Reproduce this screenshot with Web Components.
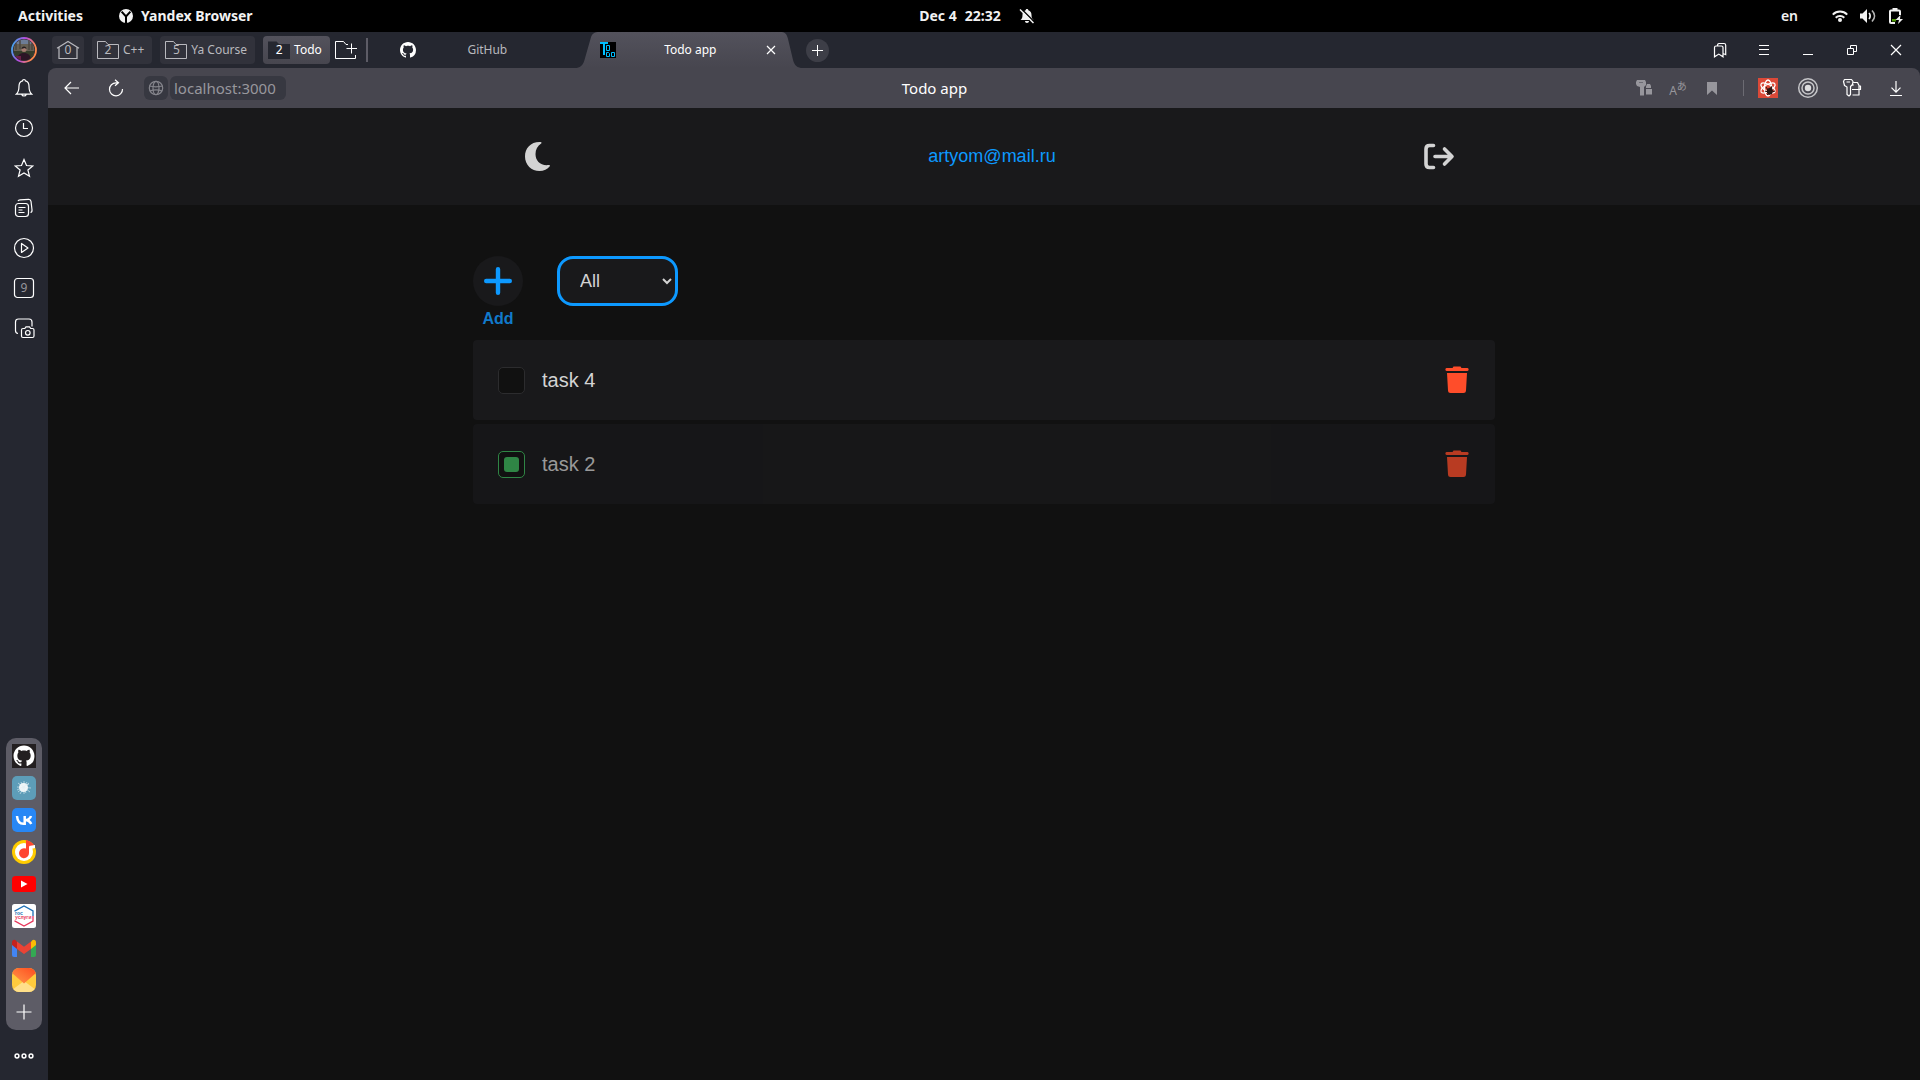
<!DOCTYPE html>
<html lang="en">
<head>
<meta charset="utf-8">
<title>Todo app</title>
<style>
  html, body { margin: 0; height: 100%; background: #111; }
  body { font-family: "Noto Sans", sans-serif; }
</style>
</head>
<body>
<desktop-shell>
  <system-bar slot="system"></system-bar>
  <side-rail slot="rail"></side-rail>
  <tab-strip slot="tabs"></tab-strip>
  <address-bar slot="address"></address-bar>
  <todo-app>
    <todo-item>task 4</todo-item>
    <todo-item done>task 2</todo-item>
  </todo-app>
</desktop-shell>

<script>
const define = (name, html, setup) => {
  const tpl = document.createElement('template');
  tpl.innerHTML = '<style>*{box-sizing:border-box}button{font:inherit;color:inherit;background:none;border:0;padding:0;margin:0;cursor:pointer}</style>' + html;
  customElements.define(name, class extends HTMLElement {
    constructor() {
      super();
      this.attachShadow({ mode: 'open' }).append(tpl.content.cloneNode(true));
    }
    connectedCallback() { if (setup) setup(this, this.shadowRoot); }
  });
};

const line = 'fill="none" stroke="currentColor" stroke-width="1.2"';
const thin = 'fill="none" stroke="currentColor" stroke-width="1"';
const cat = 'M8 0C3.58 0 0 3.58 0 8c0 3.54 2.29 6.53 5.47 7.59.4.07.55-.17.55-.38 0-.19-.01-.82-.01-1.49-2.01.37-2.53-.49-2.69-.94-.09-.23-.48-.94-.82-1.13-.28-.15-.68-.52-.01-.53.63-.01 1.08.58 1.23.82.72 1.21 1.87.87 2.33.66.07-.52.28-.87.51-1.07-1.78-.2-3.64-.89-3.64-3.95 0-.87.31-1.59.82-2.15-.08-.2-.36-1.02.08-2.12 0 0 .67-.21 2.2.82.64-.18 1.32-.27 2-.27s1.36.09 2 .27c1.53-1.04 2.2-.82 2.2-.82.44 1.1.16 1.92.08 2.12.51.56.82 1.27.82 2.15 0 3.07-1.87 3.75-3.65 3.95.29.25.54.73.54 1.48 0 1.07-.01 1.93-.01 2.2 0 .21.15.46.55.38A8.01 8.01 0 0 0 16 8c0-4.42-3.58-8-8-8z';

/* name: [width, height, markup] */
const ICONS = {
  yandex: [14, 14, '<circle cx="7" cy="7" r="7" fill="#f2f2f2"/><path d="M2.6 2.6 7 7.4l4.4-4.8M7 7v7" fill="none" stroke="#000" stroke-width="2"/>'],
  mute: [16, 16, '<path d="M8 1c.8 0 1.3.5 1.3 1.2C11.5 2.8 12.5 4.600 12.5 7c0 3 .8 4 2 5H1.5c1.2-1 2-2 2-5 0-2.400 1-4.200 3.200-4.800C6.700 1.5 7.200 1 8 1zM6 13h4c0 1.3-.8 2-2 2s-2-.7-2-2z" fill="#f2f2f2"/><path d="M2.5 1 16 14.5" stroke="#000" stroke-width="1.5"/><path d="M1 1.5 14.5 15" stroke="#f2f2f2" stroke-width="1.5"/>'],
  wifi: [16, 16, '<g fill="none" stroke="#f2f2f2" stroke-width="2"><path d="M.8 6.600C4.800 2.600 11.2 2.600 15.2 6.600"/><path d="M3.7 9.700c2.400-2.3 6.200-2.3 8.600 0"/></g><circle cx="8" cy="12" r="2" fill="#f2f2f2"/>'],
  volume: [16, 16, '<path d="M0 5.5h2.5L7 1v14L2.5 10.5H0z" fill="#f2f2f2"/><path d="M9 5c1.5 1.5 1.5 4.5 0 6" fill="none" stroke="#f2f2f2" stroke-width="1.7"/><path d="M12 2.5c3.3 3.3 3.3 7.7 0 11" fill="none" stroke="#b5b5b5" stroke-width="1.7"/>'],
  battery: [16, 16, '<path d="M4.5 0h5v2h-5z" fill="#f2f2f2"/><path d="M7 15H3a1 1 0 0 1-1-1V3.5a1 1 0 0 1 1-1h8a1 1 0 0 1 1 1V7" fill="none" stroke="#f2f2f2" stroke-width="2"/><path d="M4 11h4v2.5H4z" fill="#4e9a06"/><path d="M12.5 7 7.5 12h3.5l-1 4 5-5h-3z" fill="#f2f2f2"/>'],
  avatar: [26, 26, '<defs><linearGradient id="r" x2="1" y2=".3"><stop offset="0" stop-color="#2cb8ee"/><stop offset=".5" stop-color="#b34be0"/><stop offset="1" stop-color="#ff8a4a"/></linearGradient><clipPath id="c"><circle cx="13" cy="13" r="10.5"/></clipPath></defs><circle cx="13" cy="13" r="12" fill="none" stroke="url(#r)" stroke-width="1.8"/><g clip-path="url(#c)"><path fill="#655f54" d="M0 0h26v26H0z"/><path fill="#6d7c96" d="M2 2h22v5H2z"/><path fill="#353d2b" d="M2 14h22v10H2z"/><path d="M5 4v9M9 3v9M18 3v10M21 5v8" stroke="#4b463f" stroke-width="1.5"/><path fill="#2c1526" d="M6 24c0-6 3-8 7-8s7 2 7 8z"/><path fill="#6d1f4a" d="M5 19h5v5H5z"/><circle cx="13" cy="12.5" r="2.5" fill="#a67c71"/><path fill="#251f22" d="M10.5 12a2.5 2.5 0 0 1 5 0l-2-1z"/></g>'],
  bell: [18, 20, `<path ${line} d="M9 1.5c1 0 1.4.6 1.4 1.3C13 3.5 14 5.5 14 8c0 5 .7 6.5 2.8 8.2H1.2C3.3 14.5 4 13 4 8c0-2.5 1-4.5 3.6-5.2C7.6 2.1 8 1.5 9 1.5zM6.800 16.5c.5 2 3.9 2 4.4 0"/>`],
  clock: [20, 20, `<circle cx="10" cy="10" r="8.5" ${line}/><path ${line} d="M9.500 5v5.5H14"/>`],
  star: [20, 20, `<path ${line} d="m10 1.5 2.5 6 6.2.5-4.8 4 1.6 6.3L10 14.9l-5.5 3.4L6.100 12 1.3 8l6.200-.5z"/>`],
  pages: [20, 20, `<rect x="1.500" y="5.500" width="13" height="13" rx="3" ${line}/><path ${line} d="M4 3c.4-.8 1-1 2-1.100l8.5-.6c1.5-.1 2.3.6 2.5 2l1 8.5c.2 1.5-.5 2.5-1.5 2.700M4.5 9.500h7M4.5 12h4M4.5 14.5h6"/>`],
  play: [22, 22, `<circle cx="11" cy="11" r="9.5" ${line}/><path ${line} stroke-linejoin="round" d="M8.500 6.500v9l6.500-4.500z"/>`],
  square: [22, 22, `<rect x="1.500" y="1.500" width="19" height="19" rx="3" ${line}/>`],
  camera: [22, 22, `<path ${line} d="M5 16.5c-1.8-.2-2.5-1.2-2.5-3V5c0-2 1-3 3-3h10.5c2 0 3 1 3 3v4.5M8.500 13c0-1 .5-1.500 1.500-1.500h1.800L13 9.800h3.500l1.200 1.700h1.800c1 0 1.500.5 1.500 1.500v6c0 1-.5 1.500-1.500 1.500H10c-1 0-1.500-.5-1.500-1.500z"/><circle cx="14.800" cy="15.800" r="2.300" ${line}/>`],
  dots: [20, 8, '<g fill="none" stroke="#fff" stroke-width="1.500"><circle cx="3" cy="4" r="1.900"/><circle cx="10" cy="4" r="1.900"/><circle cx="17" cy="4" r="1.900"/></g>'],
  githubTile: [24, 24, `<path fill="#231f20" d="M0 0h24v24H0z"/><path fill="#fff" transform="translate(1.5 1.5) scale(1.31)" d="${cat}"/>`],
  splash: [24, 24, '<rect width="24" height="24" rx="5" fill="#5d9db8"/><circle cx="11.5" cy="11.500" r="4.500" fill="#f2f8fa"/><path d="m6 7 12 9M17 7 6 16M12 5v13M5 11l14 1M9 6l5 11M15 6l-7 12M5 14l12-6" stroke="#e4f0f4" stroke-width=".6"/>'],
  vk: [24, 24, '<rect width="24" height="24" rx="5" fill="#2787f5"/><path d="M5 8c.4 4.800 2.600 7.800 6.500 7.800h1.200V8M19 8c-.7 2.300-2.800 3.900-5.800 4 3.200.2 4.900 1.400 6 4" fill="none" stroke="#fff" stroke-width="2.500"/>'],
  music: [24, 24, '<circle cx="12" cy="12" r="12" fill="#fc0"/><circle cx="12" cy="12" r="9" fill="#fff"/><path d="M14 0c3.200.7 6 2.400 8 5l-2 3-3-1.800V13a5 5 0 1 1-3-4.400z" fill="#ff4530"/><path d="M23 5v3l-4 1-2-3z" fill="#fff"/>'],
  youtube: [24, 24, '<rect y="4" width="24" height="16" rx="3.500" fill="#f00"/><path d="m9 8.500 6.500 3.500L9 15.500z" fill="#fff"/>'],
  gos: [24, 24, '<rect width="24" height="24" rx="2.500" fill="#fff"/><path d="M3 7.500V7l9-5 9 5v5" fill="none" stroke="#1d6fb5" stroke-width="1.300"/><path d="M21 12v5l-9 5-9-5v-.5" fill="none" stroke="#e8375c" stroke-width="1.300"/><g font-family="Liberation Sans" font-weight="700"><text x="3" y="11" font-size="5" fill="#1d6fb5">гос</text><text x="3" y="15" font-size="5" fill="#e8375c">услуги</text></g>'],
  gmail: [24, 24, '<path fill="#4285f4" d="M0 7h5v14H2a2 2 0 0 1-2-2z"/><path fill="#34a853" d="M19 7h5v12a2 2 0 0 1-2 2h-3z"/><path fill="#fbbc04" d="m19 6 1-1.500c2-1.500 4-.2 4 2V9l-5 4z"/><path fill="#c5221f" d="M5 6 4 4.500C2 3 0 4.300 0 6.500V9l5 4z"/><path fill="#ea4335" d="m5 5.500 7 5.300 7-5.300V13l-7 5-7-5z"/>'],
  mail: [24, 24, '<defs><clipPath id="m"><rect width="24" height="24" rx="7"/></clipPath><linearGradient id="g" x1="1" x2="0" y2="1"><stop stop-color="#ff4b1f"/><stop offset="1" stop-color="#ff9b4a"/></linearGradient></defs><g clip-path="url(#m)"><path fill="#ffcb3d" d="M0 0h24v24H0z"/><path fill="#ffe08a" d="m0 22 12-9 12 9v2H0z"/><path fill="url(#g)" d="M0 0h24v5L12 15.500 0 5z"/></g>'],
  plus: [16, 16, `<path ${line} d="M8 .5v15M.5 8h15"/>`],
  home: [24, 20, `<path ${line} d="M1 8.200 12 1.500l11 6.700M3 7.500v11h18v-11"/>`],
  folder: [24, 20, `<path ${thin} d="M1.500 1.500h8l2.500 3h10.500v14h-21z"/>`],
  folderFull: [24, 20, '<path fill="#252730" d="M1 1.500h8.500L12 4h11v15H1z"/>'],
  folderPlus: [24, 20, `<path ${thin} d="M14 4.500h-2l-2.500-3h-8v17h20V15M17.500 3.500v10M12.500 8.500h10.500"/>`],
  github: [16, 16, `<path fill="#fff" d="${cat}"/>`],
  todo: [16, 16, '<path d="M0 0h16v16H0z"/><path fill="#00bfff" d="M0 0h8v2H5v11H3V2H0z"/><path d="M6.500 3.500h3v5h-3zM6.500 10.500h2l1 1v3h-3zM11.500 10.500h3v4h-3z" fill="none" stroke="#00bfff"/>'],
  close: [12, 12, `<path ${line} d="m2 2 8 8M10 2l-8 8"/>`],
  closeBig: [14, 14, `<path ${line} d="m2 2 10 10M12 2 2 12"/>`],
  smallPlus: [13, 13, '<path stroke="#fff" d="M6.500 1v11M1 6.500h11"/>'],
  bookmarks: [16, 16, `<path ${line} d="M2.500 5.500c0-1 .5-1.500 1.500-1.500h5.500c1 0 1.500.5 1.500 1.500v9.300l-4.200-2.700-4.300 2.700zM5.500 3.800C5.500 2 6 1.500 7 1.500h5c1.200 0 1.700.5 1.700 1.700v9.500L11 11.500"/>`],
  menu: [12, 12, '<path stroke="#fff" d="M1 1.500h10M1 5.500h10M1 10.500h10"/>'],
  min: [12, 12, '<path stroke="#fff" d="M1 10.500h10"/>'],
  restore: [12, 12, '<path fill="none" stroke="#fff" d="M1.500 4.500h6v6h-6zM4.500 4V1.500h6v6H8"/>'],
  back: [18, 16, `<path ${line} d="M16 8H2M8 2 2 8l6 6"/>`],
  reload: [18, 18, `<path ${line} d="M11 3.800H9A6.500 6.500 0 1 0 15.500 10M8 .8l3.500 3-3.500 3"/>`],
  globe: [16, 16, `<g ${line}><circle cx="8" cy="8" r="6.700"/><ellipse cx="8" cy="8" rx="3" ry="6.700"/><path d="M1.300 6c4 1 9 1 13.400 0M1.800 11c4-1.500 8.500-1.500 12.400 0"/></g>`],
  keyFull: [18, 18, '<path fill="#97969c" d="M1 3l1-2h8l1 2v3L9 8v8.500H5V8L2 7 1 5z"/><path d="M4 3.500h4" stroke="#6c6b73"/><path fill="#97969c" d="M12 5h3l1 2v2h-5V7.500zM11 10h6v5.500h-6z"/>'],
  bookmark: [12, 16, '<path fill="#97969c" d="M1 2h10v13l-5-4.500L1 15z"/>'],
  react: [20, 20, '<path fill="#db4938" d="M0 0h20v20H0z"/><g fill="none" stroke="#fff" stroke-width="1.300"><ellipse cx="10" cy="10" rx="3.500" ry="8"/><ellipse cx="10" cy="10" rx="3.500" ry="8" transform="rotate(60 10 10)"/><ellipse cx="10" cy="10" rx="3.500" ry="8" transform="rotate(120 10 10)"/></g><path d="m9 11 4-2 2 3-1 4-3 1-2-2z" fill="#2a1614"/><path d="M8 9l2 3M14 8l-1 3M7 13l3 1M17 13l-3 1M9 17l2-2" stroke="#2a1614"/>'],
  target: [22, 22, '<g fill="none" stroke="#c5c5c8" stroke-width="1.500"><circle cx="11" cy="11" r="9.300"/><circle cx="11" cy="11" r="6"/></g><circle cx="11" cy="11" r="3.200" fill="#dcdcde"/>'],
  key: [20, 20, `<path ${line} stroke-linejoin="round" d="M2.500 1.500h7l1.500 2-.5 3-2 2v8l-1.500 1.500L5 16.500V9L2.500 7.500l-1-4zM4.500 4h3.500M11.500 4.500h4l1.500 3v9.500h-6.500M10.500 7.500l1-1M10 11.500h8.500v-3.500h-1.500"/>`],
  download: [14, 18, `<path ${line} d="M7 2v11M2.500 8.700 7 13.200l4.500-4.500M1 16.500h12"/>`],
  moon: [27, 31, '<path fill="#d3d3d3" d="M16.600 1C7 .5 1 7 1 15.500 1 24 7.500 30 15.500 30c4.300 0 8-1.800 10.300-4.800.4-.8-.2-1.500-1-1.200C16.500 25 11.500 20 11.500 13c0-4.500 2-8.200 5.700-10.500.7-.6.300-1.500-.6-1.500z"/>'],
  logout: [32, 28, '<g fill="none" stroke="#d3d3d3" stroke-width="3.600" stroke-linecap="round" stroke-linejoin="round"><path d="M10.500 2.500H6.500C4 2.500 3 3.500 3 6v15c0 2.500 1 3.500 3.500 3.500h4"/><path d="M12 13.500h16M21.500 6l7.500 7.500-7.500 7.500"/></g>'],
  add: [28, 28, '<path d="M14 2.200v23.600M2.200 14h23.600" fill="none" stroke="#0d99ff" stroke-width="4.400" stroke-linecap="round"/>'],
  trash: [24, 28, '<path fill="#ff4d2a" d="M1.500 2h6l1-1.500h7l1 1.500h6c1.500.3 1.500 2.700 0 3h-21C0 4.700 0 2.300 1.500 2zM2 7h20l-1 17.500c-.1 1.700-1 2.500-2.500 2.500h-13C4 27 3.100 26.200 3 24.500z"/>']
};

define('ui-icon', `<style>:host{display:block;flex:none;line-height:0}svg{display:block;margin:auto}</style><span></span>`, (el, root) => {
  const [w, h, body] = ICONS[el.getAttribute('name')];
  root.querySelector('span').innerHTML = `<svg width="${w}" height="${h}" viewBox="0 0 ${w} ${h}" aria-hidden="true">${body}</svg>`;
});

define('desktop-shell', `
<style>
  :host { display: flex; flex-direction: column; min-height: 100vh; background: #252730; }
  .window { flex: 1; display: grid; grid-template-columns: 48px minmax(0, 1fr); }
  .main { display: flex; flex-direction: column; }
</style>
<slot name="system"></slot>
<div class="window">
  <slot name="rail"></slot>
  <div class="main"><slot name="tabs"></slot><slot name="address"></slot><slot></slot></div>
</div>`);

define('system-bar', `
<style>
  :host { display: grid; grid-template-columns: 1fr auto 1fr; align-items: center; height: 32px; padding: 0 16px; background: #000; color: #f2f2f2; font: 700 14px/32px "Noto Sans", sans-serif; }
  div, .app { display: flex; align-items: center; }
  .start { gap: 36px; padding-left: 2px; } .app { gap: 8px; }
  .time { display: flex; gap: 8px; }
  .end { justify-content: space-between; padding-left: 18px; }
  .tray { gap: 12px; font-weight: 600; } .tray span { margin-right: 22px; }
</style>
<div class="start"><button>Activities</button><button class="app"><ui-icon name="yandex"></ui-icon>Yandex Browser</button></div>
<div class="time"><span>Dec 4</span><span>22:32</span></div>
<div class="end"><ui-icon name="mute"></ui-icon>
  <div class="tray"><span>en</span><ui-icon name="wifi"></ui-icon><ui-icon name="volume"></ui-icon><ui-icon name="battery"></ui-icon></div></div>`);

define('side-rail', `
<style>
  :host { display: flex; flex-direction: column; align-items: center; color: #fff; padding-bottom: 4px; }
  button { display: grid; place-items: center; width: 48px; height: 40px; }
  button > * { grid-area: 1 / 1; }
  .profile { height: 36px; }
  .count { color: #97969c; font-size: 12px; line-height: 20px; }
  .dock { display: flex; flex-direction: column; gap: 8px; margin: auto 0 6px; padding: 6px; border-radius: 10px; background: #5d5c66; }
  .dock button { width: 24px; height: 24px; }
</style>
<button class="profile" aria-label="Profile"><ui-icon name="avatar"></ui-icon></button>
<button aria-label="Notifications"><ui-icon name="bell"></ui-icon></button>
<button aria-label="History"><ui-icon name="clock"></ui-icon></button>
<button aria-label="Favourites"><ui-icon name="star"></ui-icon></button>
<button aria-label="Collections"><ui-icon name="pages"></ui-icon></button>
<button aria-label="Video"><ui-icon name="play"></ui-icon></button>
<button aria-label="Open tabs"><ui-icon name="square"></ui-icon><span class="count">9</span></button>
<button aria-label="Screenshot"><ui-icon name="camera"></ui-icon></button>
<nav class="dock">
  <button aria-label="GitHub"><ui-icon name="githubTile"></ui-icon></button>
  <button aria-label="Chat"><ui-icon name="splash"></ui-icon></button>
  <button aria-label="VK"><ui-icon name="vk"></ui-icon></button>
  <button aria-label="Music"><ui-icon name="music"></ui-icon></button>
  <button aria-label="YouTube"><ui-icon name="youtube"></ui-icon></button>
  <button aria-label="Gosuslugi"><ui-icon name="gos"></ui-icon></button>
  <button aria-label="Gmail"><ui-icon name="gmail"></ui-icon></button>
  <button aria-label="Mail"><ui-icon name="mail"></ui-icon></button>
  <button aria-label="Add"><ui-icon name="plus"></ui-icon></button>
</nav>
<button aria-label="More"><ui-icon name="dots"></ui-icon></button>`);

define('tab-group', `
<style>
  :host { display: block; color: #b9b9be; }
  button { display: flex; align-items: center; gap: 3px; height: 28px; padding: 0 8px 0 4px; border-radius: 4px; background: #31323b; font-size: 12px; line-height: 28px; white-space: nowrap; }
  :host([compact]) button { gap: 0; padding: 0 4px; }
  :host([active]) button { background: linear-gradient(#53525c, #47464f); color: #fff; }
  .mark { display: grid; place-items: center; }
  .mark > * { grid-area: 1 / 1; }
  .mark span { line-height: 20px; }
</style>
<button><span class="mark"></span><slot></slot></button>`, (el, root) => {
  root.querySelector('.mark').innerHTML =
    `<ui-icon name="${el.getAttribute('icon')}"></ui-icon><span>${el.getAttribute('count')}</span>`;
});

define('tab-strip', `
<style>
  :host { display: flex; align-items: center; height: 36px; color: #fff; font-size: 13px; }
  .groups { display: flex; align-items: center; gap: 8px; padding-left: 4px; }
  .new-group { margin-left: -4px; }
  .divider { width: 2px; height: 24px; background: #5d5c66; }
  .tab { display: flex; align-items: center; }
  .tab span { flex: 1; text-align: center; font-size: 12px; line-height: 36px; }
  .idle { width: 175px; padding-right: 16px; margin-left: 32px; color: #b9b9be; }
  .edge { display: block; flex: none; }
  .body { align-self: stretch; width: 180px; padding-right: 3px; background: linear-gradient(#53525c, #47464f); }
  .round { display: grid; place-items: center; width: 23px; height: 23px; border-radius: 12px; background: #3d3e47; margin-left: 3px; }
  .controls { display: flex; margin-left: auto; padding-right: 2px; }
  .controls button { display: grid; place-items: center; width: 44px; height: 36px; }
</style>
<div class="groups">
  <tab-group compact icon="home" count="0"></tab-group>
  <tab-group icon="folder" count="2">C++</tab-group>
  <tab-group icon="folder" count="5">Ya Course</tab-group>
  <tab-group active icon="folderFull" count="2">Todo</tab-group>
  <button class="new-group" aria-label="New group"><ui-icon name="folderPlus"></ui-icon></button>
  <div class="divider"></div>
</div>
<div class="tab idle"><ui-icon name="github"></ui-icon><span>GitHub</span></div>
<svg class="edge" width="25" height="36" viewBox="0 0 25 36"><defs><linearGradient id="a" x2="0" y2="1"><stop stop-color="#53525c"/><stop offset="1" stop-color="#47464f"/></linearGradient></defs><path fill="url(#a)" d="M25 0C19 0 17 1.500 15.500 7L9.500 28C8 33.500 5 36 0 36h25z"/></svg>
<div class="tab body"><ui-icon name="todo"></ui-icon><span>Todo app</span><button aria-label="Close tab"><ui-icon name="close"></ui-icon></button></div>
<svg class="edge" width="23" height="36" viewBox="0 0 23 36"><path fill="url(#a)" d="M0 0c5 0 6.500 1.500 8 7l5 21c1.500 5.500 4 8 10 8H0z"/></svg>
<button class="round" aria-label="New tab"><ui-icon name="smallPlus"></ui-icon></button>
<div class="controls">
  <button aria-label="Bookmarks"><ui-icon name="bookmarks"></ui-icon></button>
  <button aria-label="Menu"><ui-icon name="menu"></ui-icon></button>
  <button aria-label="Minimize"><ui-icon name="min"></ui-icon></button>
  <button aria-label="Restore"><ui-icon name="restore"></ui-icon></button>
  <button aria-label="Close window"><ui-icon name="closeBig"></ui-icon></button>
</div>`);

define('address-bar', `
<style>
  :host { display: flex; align-items: center; height: 40px; padding: 0 2px; border-radius: 8px 8px 0 0; background: #47464f; color: #fff; font-size: 15px; line-height: 24px; }
  button { display: grid; place-items: center; width: 44px; height: 40px; }
  .site { width: 24px; height: 24px; border-radius: 6px; background: #373841; color: #85858c; margin: 0 2px 0 6px; }
  input { width: 116px; height: 24px; padding: 0 4px; border: 0; border-radius: 6px; background: #373841; color: #97979d; font: 15px/24px "Noto Sans", sans-serif; }
  .title { flex: 1; text-align: center; }
  .actions { display: flex; align-items: center; padding-left: 44px; }
  .small { width: 34px; color: #97969c; }
  .lang { display: flex; align-items: center; justify-content: center; line-height: 16px; }
  .latin { font-size: 12px; padding-top: 6px; } .kana { font: 10px/16px "Noto Sans CJK JP", sans-serif; padding-bottom: 5px; }
  .divider { width: 1px; height: 16px; margin: 0 6px 0 14px; background: #6c6b73; }
  .extension { width: 36px; }
</style>
<button aria-label="Back"><ui-icon name="back"></ui-icon></button>
<button aria-label="Reload"><ui-icon name="reload"></ui-icon></button>
<button class="site" aria-label="Site information"><ui-icon name="globe"></ui-icon></button>
<input aria-label="Address" value="localhost:3000">
<div class="title">Todo app</div>
<div class="actions">
  <button class="small" aria-label="Passwords"><ui-icon name="keyFull"></ui-icon></button>
  <button class="small lang" aria-label="Translate"><span class="latin">A</span><span class="kana">あ</span></button>
  <button class="small" aria-label="Bookmark"><ui-icon name="bookmark"></ui-icon></button>
  <div class="divider"></div>
  <button class="extension" aria-label="React tools"><ui-icon name="react"></ui-icon></button>
  <button aria-label="Recorder"><ui-icon name="target"></ui-icon></button>
  <button aria-label="Extensions"><ui-icon name="key"></ui-icon></button>
  <button aria-label="Downloads"><ui-icon name="download"></ui-icon></button>
</div>`);

define('todo-app', `
<style>
  :host { display: block; flex: 1; background: #111; color: #d3d3d3; font-family: "Liberation Sans", sans-serif; }
  header { background: #19191b; }
  .bar, main { width: calc(100% - 32px); max-width: 1022px; margin: 0 auto; }
  .bar { display: flex; align-items: center; justify-content: space-between; height: 97px; padding: 0 40px; }
  .theme { display: grid; place-items: center; width: 48px; height: 48px; }
  a { padding-bottom: 2px; color: #0d99ff; font-size: 18px; line-height: 24px; text-decoration: none; }
  main { padding-top: 51px; }
  .tools { display: flex; align-items: flex-start; gap: 34px; height: 84px; }
  .add { display: flex; flex-direction: column; align-items: center; gap: 4px; color: #117acb; font-weight: 700; font-size: 16px; line-height: 18px; }
  .disc { display: grid; place-items: center; width: 50px; height: 50px; border-radius: 25px; background: #19191b; }
  select { width: 121px; height: 50px; padding: 0 0 0 16px; border: 3px solid #0d99ff; border-radius: 16px; background: #19191b; color: #d3d3d3; font: 18px/24px "Liberation Sans", sans-serif; outline: 0; }
  .list { display: flex; flex-direction: column; gap: 4px; }
</style>
<header><div class="bar">
  <button class="theme" aria-label="Toggle theme"><ui-icon name="moon"></ui-icon></button>
  <a href="#profile">artyom@mail.ru</a>
  <button aria-label="Log out"><ui-icon name="logout"></ui-icon></button>
</div></header>
<main>
  <div class="tools">
    <button class="add"><span class="disc"><ui-icon name="add"></ui-icon></span>Add</button>
    <select aria-label="Filter"><option>All</option><option>Active</option><option>Done</option></select>
  </div>
  <div class="list"><slot></slot></div>
</main>`);

define('todo-item', `
<style>
  :host { display: flex; align-items: center; justify-content: space-between; height: 80px; padding: 0 26px 0 25px; border-radius: 4px; background: #19191b; font-size: 20px; line-height: 24px; }
  :host([done]) { opacity: .7; }
  label { display: flex; align-items: center; gap: 17px; }
  input { appearance: none; display: grid; place-items: center; width: 27px; height: 27px; margin: 0; border: 1px solid #2c2c2e; border-radius: 5px; background: #111; }
  input:checked { border-color: #3cb75b; }
  input:checked::before { content: ""; width: 15px; height: 15px; border-radius: 3px; background: #3cb75b; }
</style>
<label><input type="checkbox"><slot></slot></label>
<button aria-label="Delete task"><ui-icon name="trash"></ui-icon></button>`, (el, root) => {
  root.querySelector('input').checked = el.hasAttribute('done');
});
</script>
</body>
</html>
